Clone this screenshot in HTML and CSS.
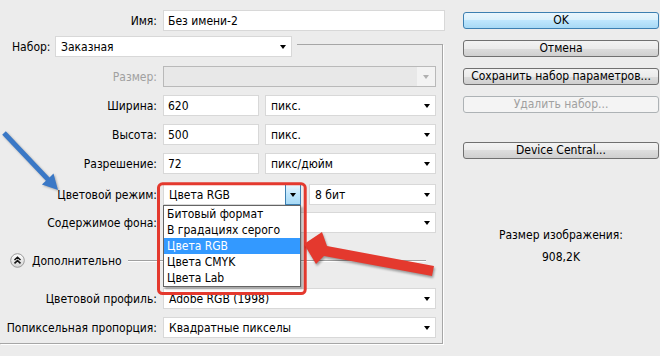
FILE: index.html
```html
<!DOCTYPE html>
<html lang="ru">
<head>
  <meta charset="UTF-8">
  <title>Новый документ</title>
  <link rel="stylesheet" href="styles.css">
</head>
<body>
  <div class="dialog">
    <!-- Left: document settings -->
    <div class="main">
      <div class="row name-row">
        <span class="lbl">Имя:</span>
        <div class="field input w-name">Без имени-2</div>
      </div>

      <div class="group">
        <div class="preset-row">
          <span>Набор:</span>
          <div class="field select w-preset">Заказная<i class="caret"></i></div>
        </div>

        <div class="row size-row">
          <span class="lbl off">Размер:</span>
          <div class="field select disabled w-full"><span class="dis-btn"><i class="caret"></i></span></div>
        </div>

        <div class="row">
          <span class="lbl">Ширина:</span>
          <div class="field input w-num">620</div>
          <div class="field select w-unit">пикс.<i class="caret"></i></div>
        </div>

        <div class="row">
          <span class="lbl">Высота:</span>
          <div class="field input w-num">500</div>
          <div class="field select w-unit">пикс.<i class="caret"></i></div>
        </div>

        <div class="row">
          <span class="lbl">Разрешение:</span>
          <div class="field input w-num">72</div>
          <div class="field select w-unit">пикс/дюйм<i class="caret"></i></div>
        </div>

        <div class="row mode-row">
          <span class="lbl">Цветовой режим:</span>
          <div class="field select w-mode">
            Цвета RGB
            <span class="dd-btn"><i class="caret"></i></span>
            <ul class="popup">
              <li>Битовый формат</li>
              <li>В градациях серого</li>
              <li class="active">Цвета RGB</li>
              <li>Цвета CMYK</li>
              <li>Цвета Lab</li>
            </ul>
          </div>
          <div class="field select w-bits">8 бит<i class="caret"></i></div>
        </div>

        <!-- value is hidden under the open list -->
        <div class="row bg-row">
          <span class="lbl">Содержимое фона:</span>
          <div class="field select w-full"><i class="caret"></i></div>
        </div>

        <div class="row adv-row">
          <span class="expander">
            <svg width="15" height="15" viewBox="0 0 15 15">
              <defs>
                <linearGradient id="knob" x1="0" y1="0" x2="0" y2="1">
                  <stop offset="0" stop-color="#ffffff"/>
                  <stop offset="1" stop-color="#d4d4d4"/>
                </linearGradient>
              </defs>
              <circle cx="7.5" cy="7.5" r="6.8" fill="url(#knob)" stroke="#9a9a9a"/>
              <path d="M4.5 7 L7.5 4.2 L10.5 7 M4.5 10.4 L7.5 7.6 L10.5 10.4" fill="none" stroke="#111" stroke-width="1.5"/>
            </svg>
          </span>
          <span>Дополнительно</span>
          <span class="rule"></span>
        </div>

        <div class="row profile-row">
          <span class="lbl">Цветовой профиль:</span>
          <div class="field select w-full">Adobe RGB (1998)<i class="caret"></i></div>
        </div>

        <div class="row">
          <span class="lbl">Попиксельная пропорция:</span>
          <div class="field select w-full">Квадратные пикселы<i class="caret"></i></div>
        </div>
      </div>
    </div>

    <!-- Right: buttons and size info -->
    <div class="side">
      <button class="btn default">OK</button>
      <button class="btn">Отмена</button>
      <button class="btn">Сохранить набор параметров...</button>
      <button class="btn" disabled>Удалить набор...</button>
      <button class="btn device">Device Central...</button>
      <div class="info">Размер изображения:</div>
      <div class="info value">908,2K</div>
    </div>
  </div>

  <!-- Annotation marks drawn over the screenshot -->
  <svg class="marks" width="660" height="356" viewBox="0 0 660 356">
    <path class="blue-arrow" d="M2.2 134.7 L5.8 131.3 L49.5 177.4 L53.5 173.6 L58 190 L41.9 184.6 L45.9 180.8 Z"/>
    <rect class="red-box" x="158.5" y="183.8" width="146.7" height="109.7" rx="4"/>
    <path class="red-arrow" d="M304 244 L322 232 L327 246 L434 266 L432 276 L324 256 L316 264 Z"/>
  </svg>
</body>
</html>
```

FILE: styles.css
```css
body {
  margin: 0;
  width: 660px;
  height: 356px;
  overflow: hidden;
  position: relative;
  background: #ececec;
  font-family: "DejaVu Sans Condensed", "DejaVu Sans", sans-serif;
  font-size: 12px;
  color: #000;
}

.dialog {
  display: flex;
}

.main {
  width: 445px;
  flex: none;
  padding-top: 10px;
}

.row {
  display: flex;
  align-items: center;
  height: 21px;
  margin-top: 8px;
}

.name-row {
  margin-top: 0;
}

.lbl {
  flex: none;
  width: 157px;
  margin-right: 6px;
  text-align: right;
  white-space: nowrap;
}

.lbl.off {
  color: #a0a0a0;
}

/* group box, its left edge is off screen */
.group {
  width: 442px;
  margin-top: 13px;
  padding-bottom: 5px;
  border: 1px solid #a6a6a6;
  border-left: none;
  box-shadow: 1px 1px 0 #fff;
}

.preset-row {
  display: flex;
  align-items: center;
  justify-content: space-between;
  box-sizing: border-box;
  width: 297px;
  height: 21px;
  margin-top: -9px;
  padding: 0 5px 0 12px;
  background: #ececec;
}

.size-row {
  margin-top: 9px;
}

.mode-row {
  margin-top: 10px;
}

.bg-row {
  margin-top: 7px;
}

.adv-row {
  margin-top: 17px;
  padding-left: 10px;
}

.profile-row {
  margin-top: 17px;
}

.field {
  flex: none;
  display: flex;
  align-items: center;
  box-sizing: border-box;
  height: 21px;
  border: 1px solid #d8d8d8;
  background: #fff;
  white-space: nowrap;
}

.input {
  padding-left: 4px;
}

.select {
  padding: 0 5px 0 5px;
  position: relative;
}

.select + .select,
.input + .select {
  margin-left: 6px;
}

.w-name { width: 282px; }
.w-preset { width: 237px; }
.w-full { width: 273px; }
.w-num { width: 96px; }
.w-unit { width: 171px; }
.w-mode { width: 138px; padding-right: 0; }
.w-bits { width: 127px; margin-left: 8px !important; }

.caret {
  margin-left: auto;
  width: 0;
  height: 0;
  border-left: 3px solid transparent;
  border-right: 3px solid transparent;
  border-top: 4px solid #000;
}

.select.disabled {
  background: #e8e8e8;
  border-color: #b9b9b9;
  padding: 0;
}

.dis-btn {
  margin-left: auto;
  display: flex;
  align-items: center;
  justify-content: center;
  width: 18px;
  height: 100%;
  background: #f3f3f3;
}

.dis-btn .caret {
  margin: 0;
  border-top-color: #b0b0b0;
}

.dd-btn {
  margin-left: auto;
  display: flex;
  align-items: center;
  justify-content: center;
  width: 14px;
  height: 19px;
  border: 1px solid #3c7fb1;
  background: linear-gradient(#eaf6fd, #bee6fd 50%, #a7d9f5);
  margin-right: -1px;
}

.dd-btn .caret {
  margin: 0;
}

.popup {
  position: absolute;
  left: -1px;
  top: 20px;
  z-index: 2;
  width: 138px;
  margin: 0;
  padding: 0;
  list-style: none;
  box-sizing: border-box;
  background: #fff;
  border: 1px solid #646464;
  box-shadow: 2px 2px 2px rgba(0, 0, 0, 0.3);
}

.popup li {
  height: 16px;
  line-height: 16px;
  padding-left: 3px;
}

.popup li.active {
  background: #3399ff;
  color: #fff;
}

.expander {
  display: flex;
  margin-right: 7px;
}

.rule {
  flex: 1;
  height: 1px;
  margin: 0 16px 0 6px;
  background: #a0a0a0;
  box-shadow: 0 1px 0 #fff;
}

/* right column */
.side {
  width: 196px;
  padding-top: 12px;
  margin-left: 18px;
}

.btn {
  display: block;
  width: 196px;
  height: 17px;
  margin: 0 0 11px;
  padding: 0;
  box-sizing: border-box;
  border: 1px solid #707070;
  border-radius: 3px;
  background: linear-gradient(#f3f3f3, #ebebeb 50%, #dddddd 50%, #cfcfcf);
  font: inherit;
  color: #000;
  line-height: 15px;
  text-align: center;
}

.btn.default {
  border-color: #3c7fb1;
  background: linear-gradient(#eaf6fd, #d9f0fc 50%, #bee6fd 50%, #a7d9f5);
}

.btn:disabled {
  border-color: #adb2b5;
  background: #f4f4f4;
  color: #a0a0a0;
}

.btn.device {
  margin-top: 29px;
}

.info {
  margin-top: 68px;
  line-height: 16px;
  text-align: center;
}

.info.value {
  margin-top: 6px;
}

/* annotation overlay */
.marks {
  position: absolute;
  left: 0;
  top: 0;
  pointer-events: none;
}

.blue-arrow {
  fill: #3a78c6;
  filter: drop-shadow(1px 1px 1px rgba(0, 0, 0, 0.3));
}

.red-box {
  fill: none;
  stroke: #e4392e;
  stroke-width: 3;
}

.red-arrow {
  fill: #e4392e;
  filter: drop-shadow(1px 2px 1px rgba(0, 0, 0, 0.35));
}
```
